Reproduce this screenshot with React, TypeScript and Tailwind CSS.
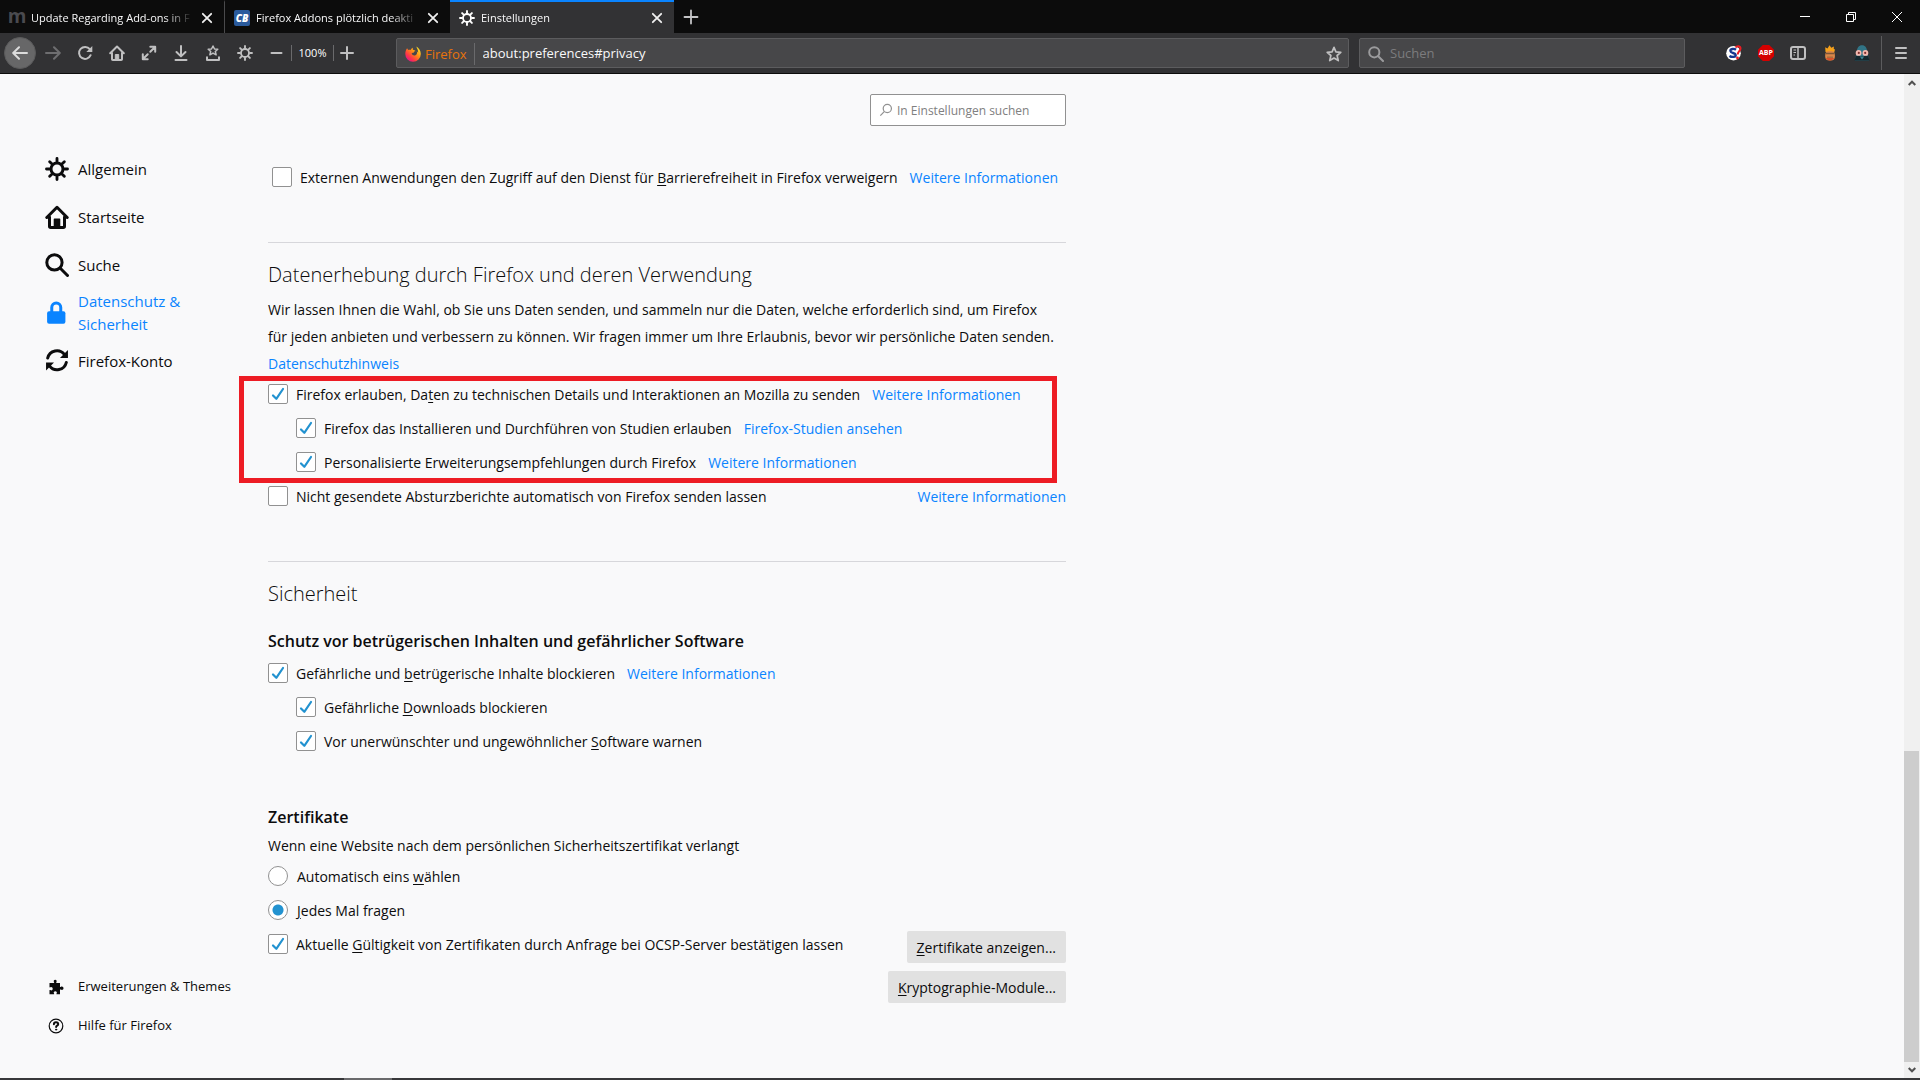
import { useState } from "react";
import type { ReactNode } from "react";

function Gear({ className, width = 2 }: { className: string; width?: number }) {
  return (
    <svg viewBox="0 0 16 16" className={className} fill="none" stroke="currentColor" strokeLinecap="round">
      <circle cx="8" cy="8" r="4" strokeWidth={width}/>
      <path strokeWidth="1.9" d="M8 1v2M8 13v2M1 8h2M13 8h2M3.1 3.1l1.3 1.3M11.6 11.6l1.3 1.3M3.1 12.9l1.3-1.3M11.6 4.4l1.3-1.3"/>
    </svg>
  );
}

function House({ className }: { className: string }) {
  return (
    <svg viewBox="0 0 16 16" className={className} fill="none" stroke="currentColor" strokeWidth="2" strokeLinecap="round" strokeLinejoin="round">
      <path d="M1.2 8.3 8 1.5l6.8 6.8M3 8v6.2c0 .5.3.8.8.8h8.4c.5 0 .8-.3.8-.8V8"/>
      <path d="M6.3 14.5v-5h3.4v5z" fill="currentColor" strokeWidth="1"/>
    </svg>
  );
}

function Magnifier({ className }: { className: string }) {
  return (
    <svg viewBox="0 0 16 16" className={className} fill="none" stroke="currentColor" strokeWidth="2" strokeLinecap="round">
      <circle cx="6.3" cy="6.3" r="5.1"/>
      <path d="m10.2 10.2 4.8 4.8"/>
    </svg>
  );
}

function Lock({ className }: { className: string }) {
  return (
    <svg viewBox="0 0 16 16" className={className}>
      <rect x="1.4" y="6.8" width="12.2" height="8.4" rx="1.3" fill="currentColor"/>
      <path d="M4.5 8V4.4a3 3 0 0 1 6 0V8" fill="none" stroke="currentColor" strokeWidth="2"/>
    </svg>
  );
}

function Sync({ className }: { className: string }) {
  return (
    <svg viewBox="0 0 16 16" className={className} fill="none" stroke="currentColor" strokeWidth="2" strokeLinecap="round">
      <path d="M1.8 6A6.3 6.3 0 0 1 13 3.700M14.200 9A6.3 6.3 0 0 1 3 11.300"/>
      <path d="M15.300.7V6H10zM.7 14.300V9H6z" fill="currentColor" stroke="none"/>
    </svg>
  );
}

function Puzzle({ className }: { className: string }) {
  return (
    <svg viewBox="0 0 16 16" className={className} fill="currentColor">
      <path d="M1.5 4h4.3c.5 0 .5-.5.2-.9C5.2 1.9 6 .7 7.2.7s2 1.2 1.2 2.4c-.3.4-.3.9.2.9H12v3.5c0 .6.5.6.9.3 1.2-.8 2.6 0 2.6 1.4s-1.4 2.2-2.6 1.4c-.4-.3-.9-.3-.9.3v4.4H8.800c-.5 0-.5-.5-.2-.9.7-1.200 0-2.200-1.300-2.200s-2 1-1.300 2.200c.3.4.3.9-.2.9H1.5v-4c0-.5.5-.5.9-.2 1.100.7 2.300 0 2.300-1.300S3.500 7.600 2.400 8.300c-.4.3-.9.3-.9-.2z"/>
    </svg>
  );
}

function Help({ className }: { className: string }) {
  return (
    <svg viewBox="0 0 16 16" className={className} fill="none" stroke="currentColor" strokeLinecap="round">
      <circle cx="8" cy="8" r="6.8" strokeWidth="1.2"/>
      <path strokeWidth="2" d="M5.9 6.2c0-1.2.9-1.9 2.1-1.9s2.2.7 2.2 1.9c0 1.3-2.1 1.5-2.1 2.8"/>
      <circle cx="8.1" cy="11.6" r=".6" strokeWidth="1" fill="currentColor"/>
    </svg>
  );
}

function Star({ className }: { className: string }) {
  return (
    <svg viewBox="0 0 16 16" className={className} fill="none" stroke="currentColor" strokeWidth="1.7" strokeLinejoin="round">
      <path d="m8 1.3 1.9 4.5 4.9.5-3.7 3.2 1.2 5.1L8 12l-4.3 2.600 1.200-5.100-3.700-3.200 4.900-.5z"/>
    </svg>
  );
}

function Close({ className }: { className: string }) {
  return (
    <svg viewBox="0 0 16 16" className={className} fill="none" stroke="currentColor" strokeWidth="1.8" strokeLinecap="round">
      <path d="m3.8 3.8 8.4 8.4M12.2 3.8l-8.4 8.4"/>
    </svg>
  );
}

function FirefoxLogo() {
  return (
    <svg viewBox="0 0 16 16" className="size-4 shrink-0">
      <defs>
        <linearGradient id="fox" x1=".85" y1=".1" x2=".15" y2=".9">
          <stop offset="0" stopColor="#ffe226"/>
          <stop offset=".4" stopColor="#ff8a16"/>
          <stop offset=".75" stopColor="#ff3647"/>
          <stop offset="1" stopColor="#e31587"/>
        </linearGradient>
      </defs>
      <path fill="url(#fox)" d="M2.1 2.2c.3.8.8 1.3 1.4 1.7.7-.3 1.5-.3 2.2 0C6.3 2.8 7 2.2 8 1.8c-.4.7-.4 1.3 0 1.9 1 .6 2.2.5 2.6 1.4-1 .1-1.6.5-1.7 1.4-.8.2-1.7.4-2.3 1.1.4 1.5 2.3 2.3 3.9 1.6 1.6-.8 1.9-2.5 1.2-4 .8.5 1.2 1 1.4 1.7C13.5 4.4 12 2.7 11.3.5c2.4 1.2 4.5 4.1 4.5 7.5A7.7 7.7 0 0 1 8 15.7 7.6 7.6 0 0 1 .3 8c0-2.2.5-4.3 1.8-5.8z"/>
    </svg>
  );
}

function ToolButton({ label, children, className = "w-8" }: { label: string; children: ReactNode; className?: string }) {
  return (
    <button aria-label={label} className={`${className} h-8 shrink-0 flex items-center justify-center`}>
      {children}
    </button>
  );
}

function Tab({ icon, title, className }: { icon: ReactNode; title: string; className: string }) {
  return (
    <div className={`flex items-center gap-1.5 pl-[9px] pr-[9px] border-t-2 ${className}`}>
      {icon}
      <button className="flex-1 min-w-0 whitespace-nowrap text-left text-[11px] leading-4 font-medium text-[#f9f9fa] [mask-image:linear-gradient(to_right,black_82%,transparent)]">{title}</button>
      <button aria-label="Tab schließen" className="text-[#f0f0f0]"><Close className="size-4"/></button>
    </div>
  );
}

function TabBar() {
  return (
    <div className="h-[33px] shrink-0 flex bg-[#0c0c0c]">
      <Tab
        className="w-[225px] border-t-transparent border-r border-r-[#4a4a4c]"
        title="Update Regarding Add-ons in F"
        icon={<span className="w-4 shrink-0 flex justify-center text-[19px] leading-4 font-bold text-[#4a4a4f] pb-1">m</span>}
      />
      <Tab
        className="w-[225px] border-t-transparent"
        title="Firefox Addons plötzlich deakti"
        icon={<span className="size-4 shrink-0 rounded-xs bg-[#2a5a9c] text-center text-[10px] leading-4 font-extrabold italic text-white">CB</span>}
      />
      <Tab
        className="w-56 bg-[#323234] border-t-[#0a84ff]"
        title="Einstellungen"
        icon={<Gear className="size-4 shrink-0 text-white" width={1.8}/>}
      />
      <button aria-label="Neuer Tab" className="w-[33px] flex items-center justify-center text-[#c4c4c6]">
        <svg viewBox="0 0 16 16" className="size-4" fill="none" stroke="currentColor" strokeWidth="1.8" strokeLinecap="round"><path d="M8 1.5v13M1.5 8h13"/></svg>
      </button>
      <div className="ml-auto flex text-white">
        <button aria-label="Minimieren" className="w-[46px] flex items-center justify-center">
          <svg viewBox="0 0 10 10" className="size-2.5" stroke="currentColor"><path d="M0 4.5h10"/></svg>
        </button>
        <button aria-label="Verkleinern" className="w-[46px] flex items-center justify-center">
          <svg viewBox="0 0 10 10" className="size-2.5" fill="none" stroke="currentColor"><path d="M.5 2.5h7v7h-7zM2.5 2.5v-2h7v7h-2"/></svg>
        </button>
        <button aria-label="Schließen" className="w-[46px] flex items-center justify-center">
          <svg viewBox="0 0 10 10" className="size-2.5" stroke="currentColor"><path d="m0 0 10 10M10 0 0 10"/></svg>
        </button>
      </div>
    </div>
  );
}

function Toolbar() {
  return (
    <div className="h-[41px] shrink-0 flex items-center bg-[#323234] border-b border-[#0c0c0c] text-[#c0c0c1]">
      <button aria-label="Zurück" className="size-8 ml-1 mr-px shrink-0 rounded-full bg-[#676768] border border-[#5a5a5b] flex items-center justify-center text-[#dcdcdc]">
        <svg viewBox="0 0 16 16" className="size-4" fill="none" stroke="currentColor" strokeWidth="2" strokeLinecap="round" strokeLinejoin="round"><path d="M15 8H1.5M7 2.2 1.2 8 7 13.8"/></svg>
      </button>
      <ToolButton label="Vor">
        <svg viewBox="0 0 16 16" className="size-4 text-[#6e6e70]" fill="none" stroke="currentColor" strokeWidth="2" strokeLinecap="round" strokeLinejoin="round"><path d="M1 8h13.5M9 2.2 14.8 8 9 13.8"/></svg>
      </ToolButton>
      <ToolButton label="Neu laden">
        <svg viewBox="0 0 16 16" className="size-4" fill="none" stroke="currentColor" strokeWidth="2" strokeLinecap="round">
          <path d="M12.8 4.2A6 6 0 1 0 13.6 10.2"/>
          <path d="M15.3 1v6h-6z" fill="currentColor" stroke="none"/>
        </svg>
      </ToolButton>
      <ToolButton label="Startseite"><House className="size-4"/></ToolButton>
      <ToolButton label="Vollbild">
        <svg viewBox="0 0 16 16" className="size-4" fill="none" stroke="currentColor" strokeWidth="2" strokeLinecap="round" strokeLinejoin="round">
          <path d="M9.3 1.8h4.9v4.9M14 2 9.3 6.7M6.7 14.2H1.8V9.3M2 14l4.7-4.7"/>
        </svg>
      </ToolButton>
      <ToolButton label="Downloads">
        <svg viewBox="0 0 16 16" className="size-4" fill="none" stroke="currentColor" strokeWidth="2" strokeLinecap="round" strokeLinejoin="round">
          <path d="M8 1v10M3.5 7 8 11.4 12.5 7M2.5 15h11"/>
        </svg>
      </ToolButton>
      <ToolButton label="Lesezeichen">
        <svg viewBox="0 0 16 16" className="size-4" fill="none" stroke="currentColor" strokeLinecap="round" strokeLinejoin="round">
          <path strokeWidth="1.5" d="m8 1 1.500 3 3.300.3-2.500 2.200.8 3.300L8 8.100 4.900 9.800l.8-3.300-2.500-2.200 3.300-.3z"/>
          <path strokeWidth="2" d="M2 12.300V15h12v-2.700"/>
        </svg>
      </ToolButton>
      <ToolButton label="Einstellungen"><Gear className="size-4" width={1.8}/></ToolButton>
      <ToolButton label="Verkleinern" className="w-[30px]">
        <svg viewBox="0 0 16 16" className="size-4" stroke="currentColor" strokeWidth="2" strokeLinecap="round"><path d="M3.500 8h10"/></svg>
      </ToolButton>
      <div className="h-4 w-px bg-[#6a6a6c]"/>
      <button className="w-[41px] text-[11px] text-white">100%</button>
      <div className="h-4 w-px bg-[#6a6a6c]"/>
      <ToolButton label="Vergrößern" className="w-[26px]">
        <svg viewBox="0 0 16 16" className="size-4" stroke="currentColor" strokeWidth="2" strokeLinecap="round"><path d="M8 2v12M2 8h12"/></svg>
      </ToolButton>

      <div className="flex-1 min-w-0 h-[30px] ml-9 pt-px pl-2 pr-1.5 flex items-center rounded-xs border border-[#5c5c5e] bg-[#474749] text-[13px]">
        <FirefoxLogo/>
        <span className="ml-1 pr-[7px] leading-[22px] text-[#e8730c] border-r border-[#6a6a6c]">Firefox</span>
        <input aria-label="Adresse" defaultValue="about:preferences#privacy" className="flex-1 min-w-0 ml-2 text-[#f9f9fa] outline-none"/>
        <button aria-label="Lesezeichen hinzufügen"><Star className="size-4"/></button>
      </div>
      <div className="w-[326px] h-[30px] ml-2.5 pt-px px-2 flex items-center gap-1.5 rounded-xs border border-[#5c5c5e] bg-[#474749] text-[13px]">
        <Magnifier className="size-4 shrink-0 text-[#9b9b9d]"/>
        <input aria-label="Suchen" placeholder="Suchen" className="flex-1 min-w-0 text-white outline-none placeholder:text-[#7c7c7e]"/>
      </div>

      <div className="ml-[33px] mr-[3px] flex">
        <ToolButton label="Suchmaschine">
          <svg viewBox="0 0 16 16" className="size-4">
            <circle cx="7.5" cy="8.2" r="7.3" fill="#fff"/>
            <path d="M10 4.8C8 3.200 4.300 3.800 4.400 6c.2 2.300 5.200 1.700 5.300 4 .1 2.200-3.800 2.500-6.300.9" fill="none" stroke="#16388f" strokeWidth="2.400"/>
            <path d="M9.500 2.500C11 .5 14.500 1 14.500 3.500c0 2.500-2.700 3-2.800 6" fill="none" stroke="#ec1c24" strokeWidth="2"/>
            <circle cx="11.500" cy="13" r="1.400" fill="#ec1c24"/>
          </svg>
        </ToolButton>
        <ToolButton label="Adblock Plus">
          <span className="size-4 flex justify-center bg-[#d40000] text-[7px] leading-4 font-bold text-white [clip-path:polygon(30%_0,70%_0,100%_30%,100%_70%,70%_100%,30%_100%,0_70%,0_30%)]">ABP</span>
        </ToolButton>
        <ToolButton label="Sidebar">
          <svg viewBox="0 0 16 16" className="size-4" fill="none" stroke="currentColor">
            <rect x="1" y="2" width="14" height="12" rx="2" strokeWidth="2"/>
            <path d="M8 2v12" strokeWidth="1.5"/>
            <path d="M3.500 5h2.500M3.500 7.500h2.500M3.500 10h1.500"/>
          </svg>
        </ToolButton>
        <ToolButton label="Cookies">
          <svg viewBox="0 0 16 16" className="size-4">
            <path d="M3.500 7 3.200 2.200 5.500 3.500 7.500.3l1.800 2.500 2.600-1.300-.1 2.400 1.200.6-.8 3z" fill="#f5a11c"/>
            <rect x="3.200" y="6" width="9.700" height="9.500" rx="4" fill="#dc8748"/>
            <path d="M3.500 7.800h9v1.400h-9zM5 11.700h6v.8H5z" fill="#7a5638"/>
            <path d="M4 13h8c-1 3.200-7 3.200-8 0z" fill="#d9502b"/>
          </svg>
        </ToolButton>
        <ToolButton label="Privatsphäre">
          <svg viewBox="0 0 16 16" className="size-4">
            <path d="M8 .3c3.200 0 5 2.700 5.300 6.700l1.900 8.500H.8L2.700 7C3 3 4.800.3 8 .3z" fill="#317486"/>
            <path d="M1.800 11h12.400l1.300 4.500H.5z" fill="#14282f"/>
            <circle cx="4.600" cy="7.900" r="2.900" fill="#f5b8ae"/>
            <circle cx="11.400" cy="7.900" r="2.900" fill="#f5b8ae"/>
            <circle cx="4.800" cy="7.900" r="1.100" fill="#7d2c2c"/>
            <circle cx="11.200" cy="7.900" r="1.100" fill="#7d2c2c"/>
            <path d="m5.800 11.500 2.200 3 2.200-3z" fill="#3d8596"/>
          </svg>
        </ToolButton>
      </div>
      <div className="w-px h-[34px] bg-[#5c5c5e] mr-[3px]"/>
      <div className="mr-[3px]">
        <ToolButton label="Menü">
          <svg viewBox="0 0 16 16" className="size-4" stroke="currentColor" strokeWidth="2" strokeLinecap="round"><path d="M3 3h10M3 8h10M3 13h10"/></svg>
        </ToolButton>
      </div>
    </div>
  );
}

const categories = [
  { label: "Allgemein", Icon: Gear },
  { label: "Startseite", Icon: House },
  { label: "Suche", Icon: Magnifier },
  { label: "Datenschutz & Sicherheit", Icon: Lock, selected: true },
  { label: "Firefox-Konto", Icon: Sync },
];

function Sidebar() {
  return (
    <nav className="w-[268px] shrink-0 pt-[71px] pb-[33px] pl-11 pr-8 flex flex-col justify-between">
      <div className="pl-px">
        {categories.map(({ label, Icon, selected }) => (
          <a key={label} href="#" className={`h-12 flex items-center gap-[9px] pr-10 text-[15px] leading-[23px] ${selected ? "text-[#0a84ff]" : "text-[#0c0c0d]"}`}>
            <Icon className="size-6 shrink-0"/>
            <span>{label}</span>
          </a>
        ))}
      </div>
      <div className="text-[13px]">
        <a href="#" className="h-[39px] flex items-center gap-3.5 pl-1"><Puzzle className="size-4"/>Erweiterungen & Themes</a>
        <a href="#" className="h-[39px] flex items-center gap-3.5 pl-1"><Help className="size-4"/>Hilfe für Firefox</a>
      </div>
    </nav>
  );
}

function Key({ children }: { children: ReactNode }) {
  return <span className="underline underline-offset-2">{children}</span>;
}

function Link({ children }: { children: ReactNode }) {
  return <a href="#" className="text-[#0a84ff] whitespace-nowrap">{children}</a>;
}

function Check({ children, checked = false }: { children: ReactNode; checked?: boolean }) {
  const [on, setOn] = useState(checked);
  return (
    <label className="flex items-center gap-2 whitespace-nowrap">
      <span className="grid size-5 shrink-0 *:col-start-1 *:row-start-1">
        <input type="checkbox" checked={on} onChange={() => setOn(!on)} className="size-5 appearance-none rounded-xs border border-[#919191] bg-white"/>
        {on && (
          <svg viewBox="0 0 20 20" className="size-5 pointer-events-none" fill="none" stroke="#2292d0" strokeWidth="2.2" strokeLinecap="round" strokeLinejoin="round">
            <path d="m5 11.500 3.300 3.300 6.700-9.800"/>
          </svg>
        )}
      </span>
      <span>{children}</span>
    </label>
  );
}

function Radio({ children, checked = false }: { children: ReactNode; checked?: boolean }) {
  return (
    <label className="h-[34px] flex items-center gap-[9px]">
      <input type="radio" name="cert" defaultChecked={checked} className="size-5 appearance-none rounded-full border border-[#919191] bg-white checked:bg-[radial-gradient(circle,#2292d0_5px,white_6px)]"/>
      <span>{children}</span>
    </label>
  );
}

function Preferences() {
  return (
    <main className="w-full max-w-[798px] pt-5 text-[14px] leading-[27px]">
      <div className="w-[196px] h-8 ml-auto px-2 flex items-center gap-1 rounded-xs border border-[#919191] bg-white text-[12px]">
        <svg viewBox="0 0 16 16" className="size-3.5 shrink-0 text-[#919191]" fill="none" stroke="currentColor" strokeWidth="1.4">
          <circle cx="9.5" cy="6.3" r="4.7"/>
          <path d="m6 9.8-4.5 4.7"/>
        </svg>
        <input aria-label="In Einstellungen suchen" placeholder="In Einstellungen suchen" className="flex-1 min-w-0 outline-none placeholder:text-[#808080]"/>
      </div>

      <div className="h-[34px] mt-[34px] px-1 flex items-center gap-3">
        <Check>Externen Anwendungen den Zugriff auf den Dienst für <Key>B</Key>arrierefreiheit in Firefox verweigern</Check>
        <Link>Weitere Informationen</Link>
      </div>

      <section className="mt-12 pt-[15px] border-t border-[#d7d7db]">
        <h2 className="text-[20px] leading-[34px] font-light">Datenerhebung durch Firefox und deren Verwendung</h2>
        <p className="mt-1 pr-2">
          Wir lassen Ihnen die Wahl, ob Sie uns Daten senden, und sammeln nur die Daten, welche erforderlich sind, um Firefox
          für jeden anbieten und verbessern zu können. Wir fragen immer um Ihre Erlaubnis, bevor wir persönliche Daten senden.{" "}
          <Link>Datenschutzhinweis</Link>
        </p>
        <div className="relative">
          <div className="h-[34px] flex items-center gap-3">
            <Check checked>Firefox erlauben, Da<Key>t</Key>en zu technischen Details und Interaktionen an Mozilla zu senden</Check>
            <Link>Weitere Informationen</Link>
          </div>
          <div className="h-[34px] pl-7 flex items-center gap-3">
            <Check checked>Firefox das Installieren und Durchführen von Studien erlauben</Check>
            <Link>Firefox-Studien ansehen</Link>
          </div>
          <div className="h-[34px] pl-7 flex items-center gap-3">
            <Check checked>Personalisierte Erweiterungsempfehlungen durch Firefox</Check>
            <Link>Weitere Informationen</Link>
          </div>
          <div className="absolute -top-px -bottom-1 -left-[29px] right-[9px] border-5 border-[#ed1c24] pointer-events-none"/>
        </div>
        <div className="h-[34px] flex items-center justify-between">
          <Check>Nicht <Key>g</Key>esendete Absturzberichte automatisch von Firefox senden lassen</Check>
          <Link>Weitere Informationen</Link>
        </div>
      </section>

      <section className="mt-12 pt-[15px] border-t border-[#d7d7db]">
        <h2 className="text-[20px] leading-[34px] font-light">Sicherheit</h2>
        <h3 className="mt-4 mb-px text-[16px] leading-7 font-semibold">Schutz vor betrügerischen Inhalten und gefährlicher Software</h3>
        <div className="h-[34px] flex items-center gap-3">
          <Check checked>Gefährliche und <Key>b</Key>etrügerische Inhalte blockieren</Check>
          <Link>Weitere Informationen</Link>
        </div>
        <div className="h-[34px] pl-7 flex items-center">
          <Check checked>Gefährliche <Key>D</Key>ownloads blockieren</Check>
        </div>
        <div className="h-[34px] pl-7 flex items-center">
          <Check checked>Vor unerwünschter und ungewöhnlicher <Key>S</Key>oftware warnen</Check>
        </div>

        <h3 className="mt-[45px] mb-px text-[16px] leading-7 font-semibold">Zertifikate</h3>
        <p>Wenn eine Website nach dem persönlichen Sicherheitszertifikat verlangt</p>
        <div className="flex justify-between">
          <div>
            <Radio>Automatisch eins <Key>w</Key>ählen</Radio>
            <Radio checked><Key>J</Key>edes Mal fragen</Radio>
            <div className="h-[34px] flex items-center">
              <Check checked>Aktuelle <Key>G</Key>ültigkeit von Zertifikaten durch Anfrage bei OCSP-Server bestätigen lassen</Check>
            </div>
          </div>
          <div className="pt-[72px] flex flex-col items-end gap-2">
            <button className="h-8 px-2.5 rounded-xs bg-[#e1e1e1]"><Key>Z</Key>ertifikate anzeigen...</button>
            <button className="h-8 px-2.5 rounded-xs bg-[#e1e1e1]"><Key>K</Key>ryptographie-Module...</button>
          </div>
        </div>
      </section>
    </main>
  );
}

function ScrollBar() {
  return (
    <div className="w-4 shrink-0 ml-auto pt-[677px] pr-px flex flex-col bg-[#f0f0f0] relative">
      <svg viewBox="0 0 8 6" className="absolute left-1 top-1.5 w-2 h-1.5" fill="none" stroke="#505050" strokeWidth="2"><path d="m.7 5 3.300-3.300L7.300 5"/></svg>
      <div className="flex-1 bg-[#cdcdcd]"/>
      <div className="h-4 flex items-center justify-center">
        <svg viewBox="0 0 8 6" className="w-2 h-1.5" fill="none" stroke="#505050" strokeWidth="2"><path d="m.7 1 3.300 3.300L7.300 1"/></svg>
      </div>
    </div>
  );
}

export default function App() {
  return (
    <div className="h-screen flex flex-col overflow-hidden bg-[#f9f9fa] text-[#0c0c0d] font-['Open_Sans','Noto_Sans',sans-serif]">
      <TabBar/>
      <Toolbar/>
      <div className="flex-1 min-h-0 flex">
        <Sidebar/>
        <Preferences/>
        <ScrollBar/>
      </div>
      <div className="h-0.5 shrink-0 flex bg-[#38383a]">
        <div className="ml-[344px] w-12 bg-[#6a6a6c]"/>
      </div>
    </div>
  );
}
